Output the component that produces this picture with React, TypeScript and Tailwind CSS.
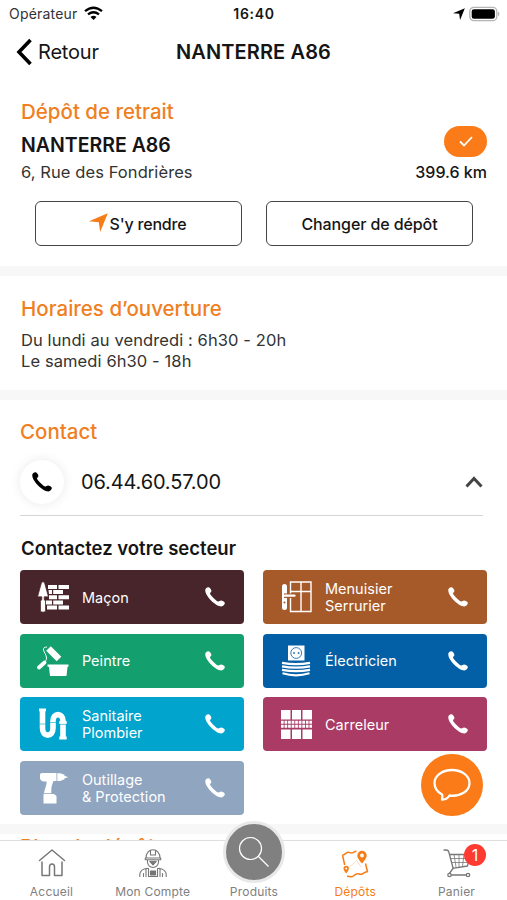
import React from 'react';

function Phone({ className = '' }: { className?: string }) {
  return (
    <svg viewBox="0 0 20 20" className={className} fill="currentColor">
      <path d="M.3 2.700C.6 1 2.200.1 3.600.3 5 .6 6.300 2.700 6.400 4 6.400 5.200 5.200 5.500 5 6.500 5.500 8.600 11.200 14 13.400 14.600 14.400 14.600 14.900 13.600 16 13.600 17.500 13.700 19.500 14.700 19.800 15.800 20 17.600 18.100 19.300 16.500 19.400 10.600 19.700-.4 8.600.3 2.700Z" />
    </svg>
  );
}

function Arrow({ className = '' }: { className?: string }) {
  return (
    <svg viewBox="0 0 18 18" className={className} fill="currentColor">
      <path d="M17.800.2 0 7.800l9.300 1L10.600 18Z" />
    </svg>
  );
}

const MasonIcon = () => (
  <svg width="34" height="32" viewBox="0 0 34 32" fill="white">
    <path d="M11 4h9v4h-9zM21.500 4H32v4H21.500zM11.500 9H15v4h-3zM16.200 9H26v4h-9.800zM12 14.200h8v4h-8zM21.500 14.200H32v4H21.500zM9 19.400h6v4H9zM16.200 19.400H26v4h-9.800zM10 24.500h10v4H10zM21.500 24.500H32v4H21.500z" />
    <path stroke="#47252a" strokeWidth=".7" d="M6 .8c-1 0-1.600 1.200-1.900 2.200L.6 15.800h4.200v3c-1 .5-1.300 1.200-1.300 2V30c0 1.500 5 1.500 5 0v-9.200c0-.9-.4-1.500-1.300-2v-3h4.200L7.900 3C7.600 2 7 .8 6 .8Z" />
  </svg>
);

const WindowIcon = () => (
  <svg width="34" height="32" viewBox="0 0 34 32" fill="none" stroke="white">
    <path d="M10.500 1H31v29.500H10.500zM21 1v29.500M10.500 10.500H31" strokeWidth="1.400" />
    <path d="M4.500 5.500v21" strokeWidth="5" strokeLinecap="round" />
    <path d="M4 14.700h11" strokeWidth="4.500" stroke="#a65a29" />
    <path d="M3.500 14.700h11" strokeWidth="2.300" strokeLinecap="round" />
    <circle cx="4.500" cy="21.500" r="1" fill="#a65a29" stroke="none" />
  </svg>
);

const PaintIcon = () => (
  <svg width="34" height="32" viewBox="0 0 34 32" fill="none" stroke="white">
    <path d="m11.500 3.500 10.500 10.500" strokeWidth="6.500" />
    <path d="M10 2C7.500 2 6 3 6.500 5c.4 2 3 5 3 8 0 2-1 3-2 4" strokeWidth="1" />
    <path d="m7.500 17.500-5.500 5" strokeWidth="3.800" strokeLinecap="round" />
    <path d="M10.500 19.500H31.500v2l-1 .5-1 9H13L12 22l-1.500-.5Z" fill="white" stroke="none" />
  </svg>
);

const SocketIcon = () => (
  <svg width="34" height="32" viewBox="0 0 34 32" fill="none" stroke="white">
    <path d="M8 .5h16.500V15.500H8z" fill="white" stroke="none" />
    <circle cx="16.200" cy="8" r="5.400" stroke="#0460a6" strokeWidth=".8" />
    <path d="M13.200 8h1.600M17.800 8h1.600" stroke="#0460a6" strokeWidth="1.700" />
    <path d="M2 17.800q14 2.500 28 0M2 21.300q14 2.500 28 0M2 24.800q14 2.500 28 0M2.500 28.300q13.500 4 27 0" strokeWidth="2.200" />
  </svg>
);

const PipeIcon = () => (
  <svg width="34" height="32" viewBox="0 0 34 32" fill="none" stroke="white">
    <path d="M5.500 2v18c0 9.500 10.500 9.500 10.500 0v-7c0-8.500 10-8.500 10 0v17" strokeWidth="5.600" />
    <path d="M2 1.800h7M22.300 14.500h7.400M22.300 30h7.400" strokeWidth="2.800" />
    <path d="M2.500 16h6M13 14.500h6M23 16.400h6" strokeWidth=".6" stroke="#00a4cc" />
  </svg>
);

const TilesIcon = () => (
  <svg width="34" height="32" viewBox="0 0 34 32" fill="white">
    <path d="M1 2h9.500v9.500H1zM12 2h9v9.500h-9zM22.500 2H32v9.500h-9.500zM1 21.500h9.500V31H1zM12 21.500h9V31h-9zM22.500 21.500H32V31h-9.500z" />
    <path d="M1 14.300h31M1 18.200h31" stroke="white" strokeWidth="3" strokeDasharray="2.700 .85" />
  </svg>
);

const DrillIcon = () => (
  <svg width="34" height="32" viewBox="0 0 34 32" fill="white">
    <path d="M3 2.500 Q3 1 5 1 H19.500 V9 H16.500 C15.500 12 14.500 14 14.300 17 L14.300 21.300 H7 C7.500 17 9.500 14 9.700 9.500 H7 C5 9.500 3 8 3 6 Z" />
    <path d="M20.300 1.300h3l4.200 1.500v1.200l3 .8v.7l-3 .8v1L23.300 9h-3zM6.500 22H17l2.500 2v7.500h-13z" />
  </svg>
);

const sectors = [
  { name: ['Maçon'], color: 'bg-[#47252a]', icon: <MasonIcon /> },
  { name: ['Menuisier', 'Serrurier'], color: 'bg-[#a65a29]', icon: <WindowIcon /> },
  { name: ['Peintre'], color: 'bg-[#149f6e]', icon: <PaintIcon /> },
  { name: ['Électricien'], color: 'bg-[#0460a6]', icon: <SocketIcon /> },
  { name: ['Sanitaire', 'Plombier'], color: 'bg-[#00a4cc]', icon: <PipeIcon /> },
  { name: ['Carreleur'], color: 'bg-[#a93b65]', icon: <TilesIcon /> },
  { name: ['Outillage', '& Protection'], color: 'bg-[#90a5c0]', icon: <DrillIcon /> },
];

const HomeIcon = () => (
  <svg width="30" height="30" viewBox="0 0 30 30" fill="none" stroke="#777" strokeWidth="1.500" strokeLinecap="round" strokeLinejoin="round">
    <path d="M2.500 12.500 15 2l12.500 10.500M5 14v13.500h7.500v-8.500c0-4 5-4 5 0v8.500H25V14" />
  </svg>
);

const WorkerIcon = () => (
  <svg width="30" height="30" viewBox="0 0 30 30" fill="none" stroke="#777" strokeWidth="1.100" strokeLinecap="round" strokeLinejoin="round">
    <path d="M8 10C8 5 11 1.800 15 1.800S22 5 22 10M7.300 10h15.400v1.800H7.300zM12.500 7V2.500M17.500 7V2.500M12.500 7h5M9.500 12v2c0 3 2.500 5.500 5.500 5.500s5.500-2.500 5.500-5.500v-2" />
    <path d="M11.800 13.300h6.400L15 17Z" fill="#777" />
    <path d="M1.800 28.500v-2c0-4 3-5.500 7.200-6.300M28.200 28.500v-2c0-4-3-5.500-7.200-6.300M5.500 28.500v-3M24.500 28.500v-3M8 28.500v-8h2.500v5M22 28.500v-8h-2.500v5M10.500 25.500v3h9v-3" />
    <path d="M12.500 23h5v4h-5z" fill="#777" />
  </svg>
);

const MapIcon = () => (
  <svg width="30" height="30" viewBox="0 0 30 30" fill="none" stroke="#f57c16" strokeWidth="1.500" strokeLinejoin="round">
    <path d="M2.500 7c2 0 3-1.700 5-2.700 2-.6 3 1.200 5 .6 1.500-.5 2-1.400 4-1.700M2.500 7l2.200 10M25.500 15.500l2 8.200c-3 0-3.500 2-6 2.500-2 .4-3-1-5-.3-2 .5-2.700 2.500-5 2.800-2 .2-2.500-.8-4.500-.2" />
    <path d="m8 20 5-4 3.500-3.500L21 19" strokeWidth=".5" opacity=".5" />
    <path d="M22 15.500c-3.700-4-4.700-6.500-4.700-8a4.700 4.700 0 0 1 9.400 0c0 1.500-1 4-4.700 8ZM6.200 25.500c-2-2.500-2.700-4-2.700-5a2.700 2.700 0 0 1 5.400 0c0 1-.7 2.500-2.700 5Z" fill="#f57c16" stroke="none" />
    <circle cx="22" cy="7.500" r="1.900" fill="white" stroke="none" />
    <circle cx="6.200" cy="20.500" r="1" fill="white" stroke="none" />
  </svg>
);

const CartIcon = () => (
  <svg width="30" height="30" viewBox="0 0 30 30" fill="none" stroke="#777" strokeWidth="1.300" strokeLinecap="round" strokeLinejoin="round">
    <path d="M2 2h2.500c1.200 0 2 .8 2.300 2l4.400 16.500M7.500 6.500H28L25.500 18l-14.800 2.300M11 20.500 7 26M9.300 27h15" />
    <path d="M12 6.500 14 19M17 6.500V19M22 6.500 20.500 18.500M8.500 10.500h18.500M9.500 14.500H26" strokeWidth=".8" />
    <circle cx="7.500" cy="27" r="1.700" fill="white" />
    <circle cx="26" cy="27" r="1.700" fill="white" />
  </svg>
);

function Tab({ label, active, children }: { label: string; active?: boolean; children?: React.ReactNode }) {
  return (
    <div className={`relative flex w-[101px] flex-col items-center ${active ? 'text-[#f57c16]' : 'text-[#808080]'}`}>
      <div className="mt-[7px] h-[30px]">{children}</div>
      <span className="mt-[6px] whitespace-nowrap text-[12px] leading-4 tracking-[0.200px]">{label}</span>
    </div>
  );
}

const Band = () => <div className="h-[10px] shrink-0 bg-[#f7f7f7]" />;

export default function App() {
  return (
    <div className="relative flex h-[900px] w-[507px] flex-col overflow-hidden bg-white font-['Inter',sans-serif] text-[#151515]">
      <div className="grid h-[27px] grid-cols-[1fr_auto_1fr] items-center pl-[9px] pr-[7px] text-[14px]">
        <div className="flex items-center gap-[6px]">
          <span className="text-[#333] tracking-[0.200px]">Opérateur</span>
          <svg width="19" height="15" viewBox="0 0 19 15" fill="none" stroke="black" strokeWidth="2.300">
            <path d="M1 5.200q8.500-7 17 0M4 8.400q5.500-4.400 11 0" />
            <path d="m6.500 10.900 3 3.100 3-3.100q-3-2.300-6 0Z" fill="black" stroke="none" />
          </svg>
        </div>
        <span className="-ml-[1px] font-semibold tracking-[0.700px]">16:40</span>
        <div className="flex items-center justify-end gap-[4px]">
          <Arrow className="h-[12px] w-[12px] text-black" />
          <svg width="31" height="16" viewBox="0 0 31 16">
            <rect x=".8" y="1.300" width="27" height="13.400" rx="4" fill="white" stroke="#b5b5b5" strokeWidth="1.300" />
            <rect x="2.700" y="3.200" width="23.200" height="9.600" rx="2.300" />
            <path d="M29 5.500q3 2.500 0 5Z" fill="#b5b5b5" />
          </svg>
        </div>
      </div>

      <header className="grid h-[50px] grid-cols-[1fr_auto_1fr] items-center px-[15px]">
        <div className="flex items-center gap-[5px]">
          <svg width="18" height="28" viewBox="0 0 18 28" fill="none" stroke="black" strokeWidth="3.600">
            <path d="M15.500 2 4 14l11.500 12" />
          </svg>
          <span className="text-[20px] tracking-[-0.200px]">Retour</span>
        </div>
        <h1 className="text-[20px] font-semibold tracking-[0.120px]">NANTERRE A86</h1>
        <span />
      </header>

      <main className="flex h-[763px] flex-col overflow-hidden">
        <section className="h-[189px] shrink-0 pl-[21px] pr-[20px] pt-[22px]">
          <h2 className="text-[20.500px] font-medium leading-[26px] text-[#f0801f]">Dépôt de retrait</h2>
          <div className="flex justify-between">
            <div>
              <div className="mt-[7px] text-[19.500px] font-semibold leading-[26px]">NANTERRE A86</div>
              <div className="mt-[1px] text-[16.500px] leading-[26px] tracking-[0.080px] text-[#333]">6, Rue des Fondrières</div>
            </div>
            <div className="flex flex-col items-end">
              <div className="mt-[1px] flex h-[31px] w-[43px] items-center justify-center rounded-full bg-[#fa7b17]">
                <svg width="14" height="11" viewBox="0 0 14 11" fill="none" stroke="white" strokeWidth="1.800"><path d="m1 5.500 4 4L13 1" /></svg>
              </div>
              <div className="mt-[2px] text-[16px] font-medium leading-[26px]">399.6 km</div>
            </div>
          </div>
          <div className="mt-[16px] flex gap-[24px] pl-[14px] text-[16px] font-medium tracking-[-0.100px]">
            <button className="flex h-[45px] w-[207px] items-center justify-center gap-[2px] rounded-[6px] border-[1.500px] border-[#444] pr-[2px]">
              <Arrow className="h-[19px] w-[19px] -translate-y-px text-[#f57c16]" />
              <span className="tracking-[-0.200px]">S'y rendre</span>
            </button>
            <button className="h-[45px] w-[207px] rounded-[6px] border-[1.500px] border-[#444]">Changer de dépôt</button>
          </div>
        </section>
        <Band />
        <section className="h-[114px] shrink-0 px-[21px] pt-[20px]">
          <h2 className="text-[20.500px] font-medium leading-[26px] text-[#f0801f]">Horaires d’ouverture</h2>
          <div className="mt-[8px] text-[16.500px] leading-[20.500px] tracking-[0.100px] text-[#333]">
            <p>Du lundi au vendredi : 6h30 - 20h</p>
            <p>Le samedi 6h30 - 18h</p>
          </div>
        </section>
        <Band />
        <section className="h-[424px] shrink-0 px-[20px] pt-[19px]">
          <h2 className="text-[20.500px] font-medium leading-[26px] text-[#f0801f]">Contact</h2>
          <div className="flex h-[71px] w-[463px] items-center border-b border-[#d5d5d5] pt-[4px]">
            <div className="flex h-[44px] w-[44px] items-center justify-center rounded-full bg-white shadow-[0_0_12px_rgba(0,0,0,0.090)]">
              <Phone className="h-[20px] w-[20px] text-black" />
            </div>
            <span className="ml-[17px] flex-1 text-[20px] tracking-[-0.150px]">06.44.60.57.00</span>
            <svg width="18" height="12" viewBox="0 0 18 12" fill="none" stroke="#444" strokeWidth="3"><path d="m1.500 10.500 7.500-8 7.500 8" /></svg>
          </div>
          <h3 className="mt-[19px] pl-px text-[18.500px] font-semibold leading-[26px]">Contactez votre secteur</h3>
          <div className="mt-[9px] grid w-[468px] grid-cols-[224px_224px] gap-x-[19px] gap-y-[9.500px] pl-[0.400px]">
            {sectors.map((s) => (
              <div key={s.name[0]} className={`flex h-[54px] items-center rounded-[4px] pl-[17px] pr-[19.500px] text-white ${s.color}`}>
                {s.icon}
                <div className="ml-[10.500px] flex-1 whitespace-nowrap text-[14.500px] leading-[17px] tracking-[0.030px]">
                  {s.name.map((n) => <div key={n}>{n}</div>)}
                </div>
                <Phone className="h-[20px] w-[20px]" />
              </div>
            ))}
          </div>
        </section>
        <Band />
        <section className="shrink-0 px-[20px]">
          <h2 className="text-[20.500px] font-medium leading-[26px] text-[#f0801f]">Plan du dépôt</h2>
        </section>
      </main>

      <nav className="relative flex h-[60px] justify-between border-t border-[#dedede] bg-white pl-px">
        <Tab label="Accueil"><HomeIcon /></Tab>
        <Tab label="Mon Compte"><WorkerIcon /></Tab>
        <Tab label="Produits">
          <div className="absolute left-1/2 top-[-20px] flex h-[62px] w-[62px] -translate-x-1/2 items-center justify-center rounded-full border-[3px] border-[#e8e8e8] bg-[#808080]">
            <svg width="32" height="32" viewBox="0 0 32 32" fill="none" stroke="white" strokeWidth="1.200"><circle cx="12.500" cy="12.500" r="11" /><path d="m20.500 20.500 10 10" /></svg>
          </div>
        </Tab>
        <Tab label="Dépôts" active><MapIcon /></Tab>
        <Tab label="Panier">
          <CartIcon />
          <div className="absolute left-[58px] top-[3px] flex h-[22px] w-[22px] items-center justify-center rounded-full bg-[#fd3b30] text-[16px] text-white">1</div>
        </Tab>
      </nav>

      <div className="absolute left-[421px] top-[754px] flex h-[62px] w-[62px] items-center justify-center rounded-full bg-[#fa7b17]">
        <svg width="38" height="34" viewBox="0 0 38 34" fill="none" stroke="white" strokeWidth="2.300" strokeLinejoin="round">
          <path d="M19 2C9 2 1.500 8 1.500 15c0 5 3 9 7.500 11.500 1 1.500.2 2.500 0 5 3.500.3 6-1.500 7.500-4C27.500 29 36.500 23 36.500 15.200 36.500 8 29 2 19 2Z" />
        </svg>
      </div>
    </div>
  );
}
